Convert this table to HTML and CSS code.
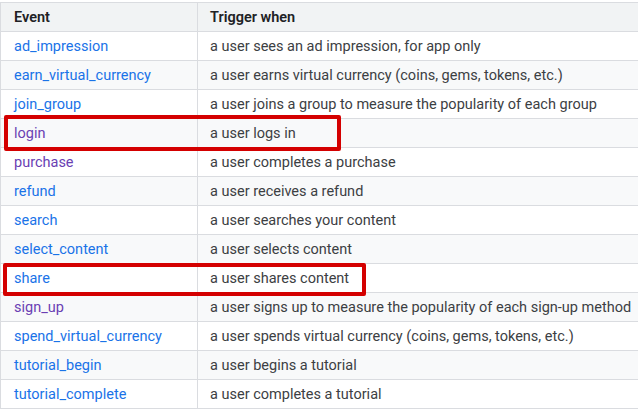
FILE: index.html
```html
<!DOCTYPE html>
<html lang="en">
<head>
<meta charset="UTF-8">
<meta name="viewport" content="width=device-width, initial-scale=1.0">
<title>Events</title>
<link rel="stylesheet" href="styles.css">
</head>
<body>
<div class="wrap">
  <table class="events">
    <thead>
      <tr><th>Event</th><th>Trigger when</th></tr>
    </thead>
    <tbody>
      <tr><td><a href="#">ad_impression</a></td><td>a user sees an ad impression, for app only</td></tr>
      <tr><td><a href="#">earn_virtual_currency</a></td><td>a user earns virtual currency (coins, gems, tokens, etc.)</td></tr>
      <tr><td><a href="#">join_group</a></td><td>a user joins a group to measure the popularity of each group</td></tr>
      <tr><td><a class="seen" href="#">login</a></td><td>a user logs in</td></tr>
      <tr><td><a class="seen" href="#">purchase</a></td><td>a user completes a purchase</td></tr>
      <tr><td><a href="#">refund</a></td><td>a user receives a refund</td></tr>
      <tr><td><a href="#">search</a></td><td>a user searches your content</td></tr>
      <tr><td><a href="#">select_content</a></td><td>a user selects content</td></tr>
      <tr><td><a href="#">share</a></td><td>a user shares content</td></tr>
      <tr><td><a class="seen" href="#">sign_up</a></td><td>a user signs up to measure the popularity of each sign-up method</td></tr>
      <tr><td><a href="#">spend_virtual_currency</a></td><td>a user spends virtual currency (coins, gems, tokens, etc.)</td></tr>
      <tr><td><a href="#">tutorial_begin</a></td><td>a user begins a tutorial</td></tr>
      <tr><td><a href="#">tutorial_complete</a></td><td>a user completes a tutorial</td></tr>
    </tbody>
  </table>
  <div class="mark mark-login"></div>
  <div class="mark mark-share"></div>
</div>
</body>
</html>
```

FILE: styles.css
```css
html, body {
  margin: 0;
  overflow: hidden;
}
body {
  background: #fff;
  font-family: Roboto, "Liberation Sans", sans-serif;
  font-size: 14.5px;
  color: #3c4043;
}
.wrap {
  position: relative;
  padding-top: 2px;
}
.events {
  border-collapse: collapse;
  width: 720px;
  table-layout: fixed;
}
.events th,
.events td {
  border: 1px solid #dadce0;
  height: 29px;
  padding: 0 12px;
  text-align: left;
  white-space: nowrap;
  box-sizing: border-box;
}
.events th:first-child,
.events td:first-child {
  width: 197px;
  padding-left: 13px;
}
.events th {
  background: #f1f3f4;
  color: #202124;
  font-weight: 600;
}
.events tbody tr:nth-child(even) {
  background: #f8f9fa;
}
.events a {
  color: #1a73e8;
  text-decoration: none;
}
.events a.seen {
  color: #6a3fb3;
}
.mark {
  position: absolute;
  border: 4px solid #d40000;
  border-radius: 2px;
  box-sizing: border-box;
}
.mark-login {
  left: 4px;
  top: 115px;
  width: 337px;
  height: 36px;
}
.mark-share {
  left: 3px;
  top: 263px;
  width: 363px;
  height: 33px;
}
```
